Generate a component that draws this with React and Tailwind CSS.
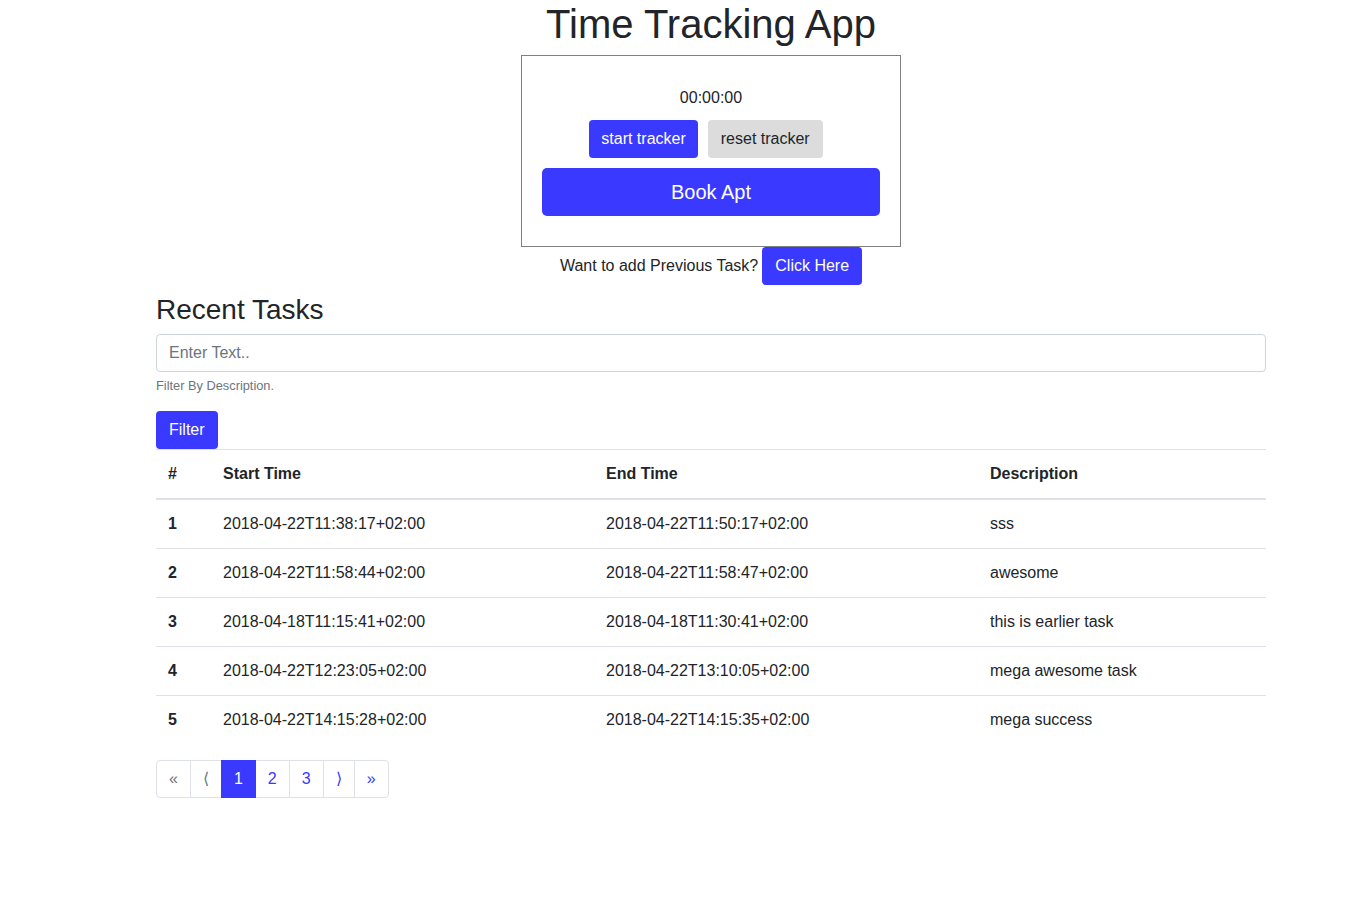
export default function App() {
  const rows = [
    ["1", "2018-04-22T11:38:17+02:00", "2018-04-22T11:50:17+02:00", "sss"],
    ["2", "2018-04-22T11:58:44+02:00", "2018-04-22T11:58:47+02:00", "awesome"],
    ["3", "2018-04-18T11:15:41+02:00", "2018-04-18T11:30:41+02:00", "this is earlier task"],
    ["4", "2018-04-22T12:23:05+02:00", "2018-04-22T13:10:05+02:00", "mega awesome task"],
    ["5", "2018-04-22T14:15:28+02:00", "2018-04-22T14:15:35+02:00", "mega success"],
  ];
  return (
    <div className="min-h-[903px] bg-white text-[#212529] text-[16px] leading-[24px]" style={{ fontFamily: '"Liberation Sans", Arial, sans-serif' }}>
      <div className="ml-[156px] w-[1110px]">
        <h1 className="text-center text-[40px] leading-[48px] font-normal mb-[7px]">Time Tracking App</h1>
        <div className="mx-auto w-[380px] border border-[#808080] pt-[30px] pb-[30px] px-[20px]">
          <div className="text-center">00:00:00</div>
          <div className="mt-[10px] flex justify-center">
            <button className="mr-[10px] bg-[#3939ff] text-white rounded-[4px] px-[12px] h-[38px] leading-[24px]">start tracker</button>
            <button className="mr-[10px] bg-[#dcdcdc] text-[#212529] rounded-[4px] px-[13px] h-[38px] leading-[24px]">reset tracker</button>
          </div>
          <button className="mt-[10px] w-full h-[48px] bg-[#3939ff] text-white rounded-[5px] text-[20px] leading-[30px]">Book Apt</button>
        </div>
        <div className="flex justify-center items-center">
          <span>Want to add Previous Task?</span>
          <button className="ml-[4px] bg-[#3939ff] text-white rounded-[4px] px-[13px] h-[38px] leading-[24px]">Click Here</button>
        </div>
        <h2 className="mt-[8px] mb-[7px] text-[28px] leading-[33.6px] font-normal">Recent Tasks</h2>
        <div className="h-[38px] border border-[#ced4da] rounded-[4px] px-[12px] flex items-center text-[#6c757d]">Enter Text..</div>
        <div className="mt-[4px] text-[12.8px] leading-[19.2px] text-[#6c757d]">Filter By Description.</div>
        <button className="mt-[16px] bg-[#3939ff] text-white rounded-[4px] px-[13px] h-[38px] leading-[24px] block">Filter</button>
        <table className="w-full table-fixed border-collapse mb-[16px]">
          <colgroup>
            <col className="w-[55px]" />
            <col className="w-[383px]" />
            <col className="w-[384px]" />
            <col />
          </colgroup>
          <thead>
            <tr>
              {["#", "Start Time", "End Time", "Description"].map((h) => (
                <th key={h} className="text-left font-bold p-[12px] border-t border-b-2 border-[#dee2e6]">{h}</th>
              ))}
            </tr>
          </thead>
          <tbody>
            {rows.map((r, i) => (
              <tr key={r[0]}>
                <td className={"p-[12px] font-bold border-[#dee2e6] " + (i === 0 ? "" : "border-t")}>{r[0]}</td>
                <td className={"p-[12px] border-[#dee2e6] " + (i === 0 ? "" : "border-t")}>{r[1]}</td>
                <td className={"p-[12px] border-[#dee2e6] " + (i === 0 ? "" : "border-t")}>{r[2]}</td>
                <td className={"p-[12px] border-[#dee2e6] " + (i === 0 ? "" : "border-t")}>{r[3]}</td>
              </tr>
            ))}
          </tbody>
        </table>
        <div className="flex">
          <div className="flex border border-[#dee2e6] rounded-[4px] h-[38px] leading-[20px]">
            <span className="px-[12px] flex items-center text-[#6c757d]">«</span>
            <span className="px-[12px] flex items-center text-[#6c757d] border-l border-[#dee2e6]">⟨</span>
            <span className="px-[12px] flex items-center bg-[#3939ff] text-white -my-px h-[38px] border-x border-[#3939ff]">1</span>
            <span className="px-[12px] flex items-center text-[#3939ff]">2</span>
            <span className="px-[12px] flex items-center text-[#3939ff] border-l border-[#dee2e6]">3</span>
            <span className="px-[12px] flex items-center text-[#3939ff] border-l border-[#dee2e6]">⟩</span>
            <span className="px-[12px] flex items-center text-[#3939ff] border-l border-[#dee2e6]">»</span>
          </div>
        </div>
      </div>
    </div>
  );
}
